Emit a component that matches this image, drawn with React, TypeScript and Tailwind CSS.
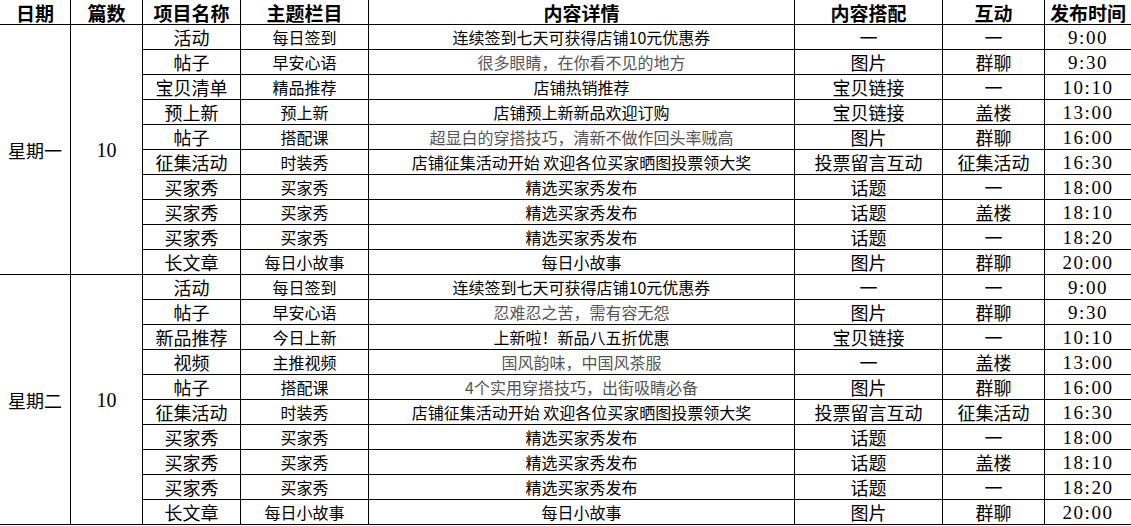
import React from 'react';

type Row = {
  item: string;
  topic: string;
  detail: string;
  light?: boolean;
  media: string;
  interact: string;
  time: string;
};

const monday: Row[] = [
  { item: '活动', topic: '每日签到', detail: '连续签到七天可获得店铺10元优惠券', media: '一', interact: '一', time: '9:00' },
  { item: '帖子', topic: '早安心语', detail: '很多眼睛，在你看不见的地方', light: true, media: '图片', interact: '群聊', time: '9:30' },
  { item: '宝贝清单', topic: '精品推荐', detail: '店铺热销推荐', media: '宝贝链接', interact: '一', time: '10:10' },
  { item: '预上新', topic: '预上新', detail: '店铺预上新新品欢迎订购', media: '宝贝链接', interact: '盖楼', time: '13:00' },
  { item: '帖子', topic: '搭配课', detail: '超显白的穿搭技巧，清新不做作回头率贼高', light: true, media: '图片', interact: '群聊', time: '16:00' },
  { item: '征集活动', topic: '时装秀', detail: '店铺征集活动开始 欢迎各位买家晒图投票领大奖', media: '投票留言互动', interact: '征集活动', time: '16:30' },
  { item: '买家秀', topic: '买家秀', detail: '精选买家秀发布', media: '话题', interact: '一', time: '18:00' },
  { item: '买家秀', topic: '买家秀', detail: '精选买家秀发布', media: '话题', interact: '盖楼', time: '18:10' },
  { item: '买家秀', topic: '买家秀', detail: '精选买家秀发布', media: '话题', interact: '一', time: '18:20' },
  { item: '长文章', topic: '每日小故事', detail: '每日小故事', media: '图片', interact: '群聊', time: '20:00' },
];

const tuesday: Row[] = [
  { item: '活动', topic: '每日签到', detail: '连续签到七天可获得店铺10元优惠券', media: '一', interact: '一', time: '9:00' },
  { item: '帖子', topic: '早安心语', detail: '忍难忍之苦，需有容无怨', light: true, media: '图片', interact: '群聊', time: '9:30' },
  { item: '新品推荐', topic: '今日上新', detail: '上新啦！新品八五折优惠', media: '宝贝链接', interact: '一', time: '10:10' },
  { item: '视频', topic: '主推视频', detail: '国风韵味，中国风茶服', light: true, media: '一', interact: '盖楼', time: '13:00' },
  { item: '帖子', topic: '搭配课', detail: '4个实用穿搭技巧，出街吸睛必备', light: true, media: '图片', interact: '群聊', time: '16:00' },
  { item: '征集活动', topic: '时装秀', detail: '店铺征集活动开始 欢迎各位买家晒图投票领大奖', media: '投票留言互动', interact: '征集活动', time: '16:30' },
  { item: '买家秀', topic: '买家秀', detail: '精选买家秀发布', media: '话题', interact: '一', time: '18:00' },
  { item: '买家秀', topic: '买家秀', detail: '精选买家秀发布', media: '话题', interact: '盖楼', time: '18:10' },
  { item: '买家秀', topic: '买家秀', detail: '精选买家秀发布', media: '话题', interact: '一', time: '18:20' },
  { item: '长文章', topic: '每日小故事', detail: '每日小故事', media: '图片', interact: '群聊', time: '20:00' },
];

const headers = ['日期', '篇数', '项目名称', '主题栏目', '内容详情', '内容搭配', '互动', '发布时间'];

const cell = 'bg-white flex items-center justify-center whitespace-nowrap overflow-hidden leading-none';

const DayBlock: React.FC<{ day: string; rows: Row[] }> = ({ day, rows }) => (
  <>
    <div className={`${cell} row-span-10 text-[18px]`}>{day}</div>
    <div className={`${cell} row-span-10 text-[20px] font-['Liberation_Serif',serif]`}>10</div>
    {rows.map((r, i) => (
      <React.Fragment key={i}>
        <div className={`${cell} text-[18px]`}>{r.item}</div>
        <div className={`${cell} text-[16px]`}>{r.topic}</div>
        <div className={`${cell} text-[16px] ${r.light ? 'text-[#555]' : ''}`}>{r.detail}</div>
        <div className={`${cell} text-[18px]`}>{r.media}</div>
        <div className={`${cell} text-[18px]`}>{r.interact}</div>
        <div className={`${cell} text-[19px] tracking-[1.5px] font-['Liberation_Serif',serif]`}>{r.time}</div>
      </React.Fragment>
    ))}
  </>
);

export default function App() {
  return (
    <div className="w-[1131px] h-[526px] bg-white text-black font-['Noto_Sans_CJK_SC',sans-serif]">
      <div className="grid grid-cols-[70px_71px_97px_127px_425px_147px_101px_86px] grid-rows-[24px_repeat(20,24px)] gap-px bg-black pb-px">
        {headers.map(h => (
          <div key={h} className={`${cell} text-[19px] font-bold`}>{h}</div>
        ))}
        <DayBlock day="星期一" rows={monday} />
        <DayBlock day="星期二" rows={tuesday} />
      </div>
    </div>
  );
}
